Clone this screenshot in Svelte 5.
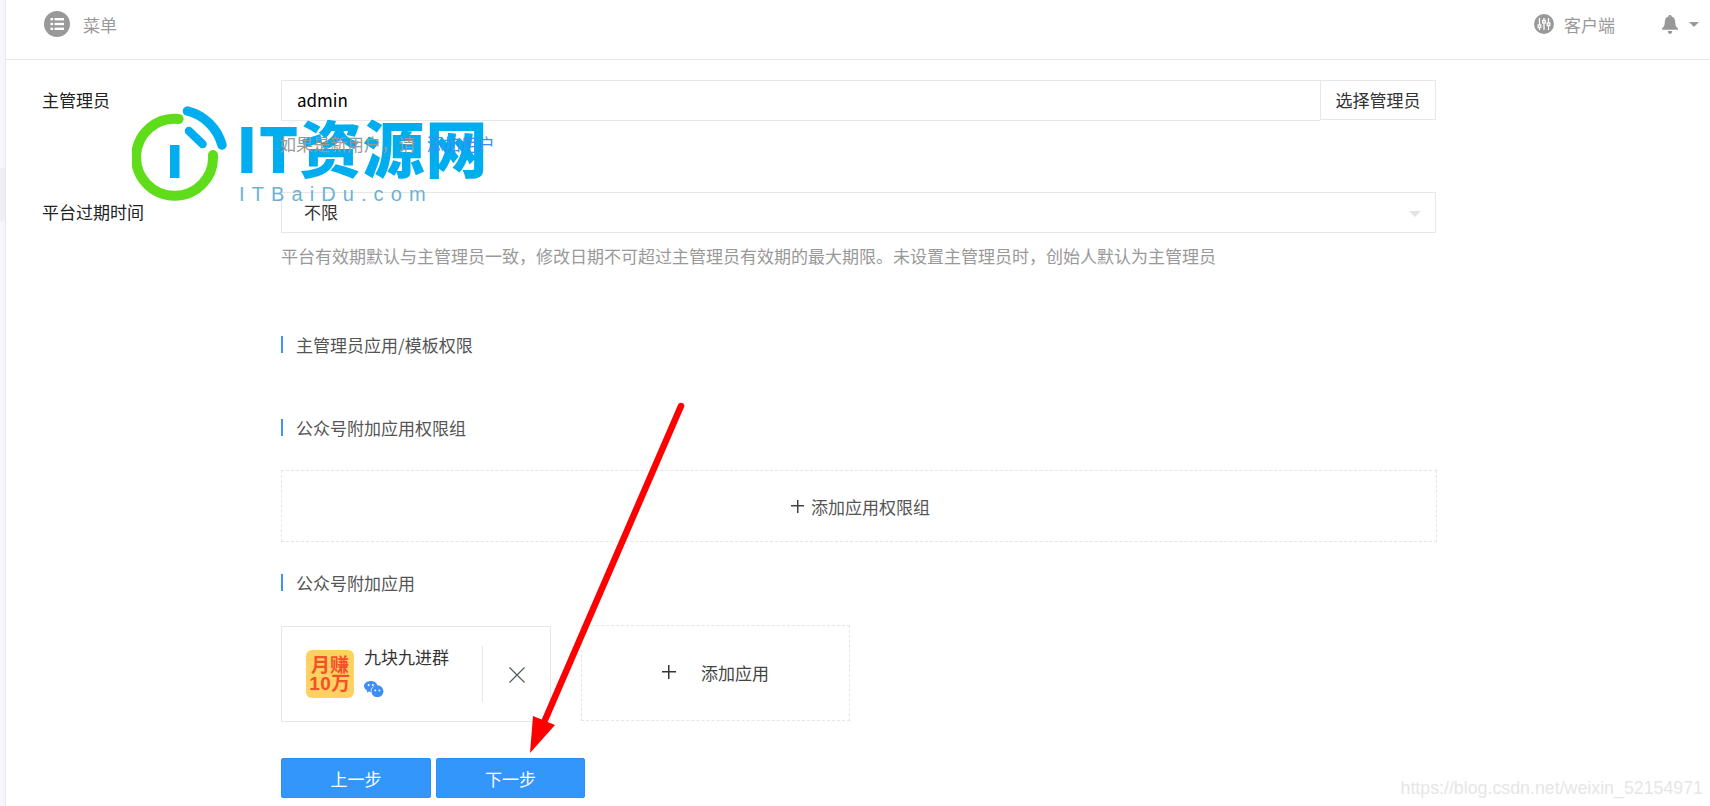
<script>
  const sections = { first: '主管理员应用/模板权限', second: '公众号附加应用权限组', third: '公众号附加应用' };
</script>

<div class="page">
  <aside class="rail"><div class="rail-mark"></div></aside>
  <main class="main">
    <header class="top">
      <div class="top-left">
        <svg class="menu-ic" viewBox="0 0 26 26" aria-hidden="true">
          <circle cx="13" cy="13" r="13" fill="#999"/>
          <g fill="#fff">
            <rect x="6.5" y="7" width="2.6" height="2.4"/><rect x="10.5" y="7" width="9.5" height="2.4"/>
            <rect x="6.5" y="11.8" width="2.6" height="2.4"/><rect x="10.5" y="11.8" width="9.5" height="2.4"/>
            <rect x="6.5" y="16.6" width="2.6" height="2.4"/><rect x="10.5" y="16.6" width="9.5" height="2.4"/>
          </g>
        </svg>
        <span>菜单</span>
      </div>
      <div class="top-right">
        <svg class="client-ic" viewBox="0 0 20 20" aria-hidden="true">
          <circle cx="10" cy="10" r="10" fill="#999"/>
          <g stroke="#fff" stroke-width="1.3" fill="#999">
            <path d="M5.5 4v12M10 4v12M14.5 4v12"/>
            <rect x="4.2" y="11" width="2.6" height="2.4"/>
            <rect x="8.7" y="6.5" width="2.6" height="2.4"/>
            <rect x="13.2" y="9" width="2.6" height="2.4"/>
          </g>
        </svg>
        <span class="client-text">客户端</span>
        <svg class="bell-ic" viewBox="0 0 16 19" aria-hidden="true">
          <path fill="#999" d="M8 0c1 0 1.6.6 1.6 1.500 2.600.7 3.600 3 3.600 5.600 0 3 .8 4.800 2.800 6.400v1.200H0v-1.200c2-1.600 2.800-3.400 2.800-6.400 0-2.600 1-4.900 3.600-5.600C6.400.6 7 0 8 0zM5.800 16h4.400c0 1.700-1 3-2.200 3s-2.200-1.300-2.200-3z"/>
        </svg>
        <span class="caret"></span>
      </div>
    </header>

    <form class="form" onsubmit={(e) => e.preventDefault()}>
      <div class="row">
        <div class="label">主管理员</div>
        <div class="control">
          <div class="input-group">
            <div class="input">admin</div>
            <div class="addon">选择管理员</div>
          </div>
          <p class="help help-first">如果是新用户，请 <span class="link">添加用户</span></p>
        </div>
      </div>

      <div class="row row-2">
        <div class="label">平台过期时间</div>
        <div class="control">
          <div class="select"><span>不限</span><i class="select-caret"></i></div>
          <p class="help">平台有效期默认与主管理员一致，修改日期不可超过主管理员有效期的最大期限。未设置主管理员时，创始人默认为主管理员</p>
        </div>
      </div>

      <div class="block">
        <h3 class="sec sec-1">{sections.first}</h3>
        <h3 class="sec sec-2">{sections.second}</h3>
        <div class="dash-wide"><span class="plus-s"></span><span>添加应用权限组</span></div>
        <h3 class="sec sec-3">{sections.third}</h3>
        <div class="apps">
          <div class="app-card">
            <div class="app-logo"><span>月赚</span><span class="ten">10万</span></div>
            <div class="app-info">
              <div class="app-name">九块九进群</div>
              <svg class="wx" viewBox="0 0 20 16" aria-hidden="true">
                <path fill="#3f8ef5" d="M7 0c3.500 0 6.300 2.200 6.300 5.100-.3 0-.6-.1-.9-.1-3.100 0-5.600 2.100-5.600 4.700 0 .4.100.8.200 1.200H7c-.7 0-1.300-.1-2-.3l-2.300 1.200.6-2C1.300 8.500 0 7 0 5.100 0 2.200 3.200 0 7 0z"/>
                <circle cx="13.400" cy="10.200" r="6" fill="#3f8ef5"/>
                <circle cx="4.700" cy="4" r="1" fill="#fff"/><circle cx="8.900" cy="4" r="1" fill="#fff"/>
                <circle cx="11.300" cy="9.400" r=".9" fill="#fff"/><circle cx="15.300" cy="9.400" r=".9" fill="#fff"/>
              </svg>
            </div>
            <div class="app-div"></div>
            <svg class="close" viewBox="0 0 16 16" aria-hidden="true"><path d="M.5.500l15 15M15.500.500l-15 15" stroke="#4a5a5c" stroke-width="1.100" fill="none"/></svg>
          </div>
          <div class="app-add"><span class="plus-l"></span><span>添加应用</span></div>
        </div>
        <div class="actions">
          <button type="button" class="btn btn-prev">上一步</button>
          <button type="button" class="btn btn-next">下一步</button>
        </div>
      </div>
    </form>
  </main>

  <svg class="arrow" viewBox="0 0 1710 806" aria-hidden="true">
    <path d="M681 406 L 545 720" stroke="#fe0000" stroke-width="6.500" stroke-linecap="round" fill="none"/>
    <path d="M530 753 L533 716 L555 725 Z" fill="#fe0000"/>
  </svg>

  <div class="brand">
    <svg class="brand-mark" viewBox="0 0 100 100" aria-hidden="true">
      <path d="M46.600 14 A38.500 38.500 0 1 0 81 50" fill="none" stroke="#5fdd1a" stroke-width="10" stroke-linecap="round"/>
      <path d="M55.500 6 A48 48 0 0 1 90 40" fill="none" stroke="#00adef" stroke-width="9.500" stroke-linecap="round"/>
      <path d="M57 26 L70.500 39" fill="none" stroke="#00adef" stroke-width="8.500" stroke-linecap="round"/>
      <rect x="38" y="40" width="9.500" height="33" fill="#00adef"/>
    </svg>
    <div class="brand-text">
      <div class="brand-main">IT资源网</div>
      <div class="brand-sub">ITBaiDu.com</div>
    </div>
  </div>

  <div class="mark">https://blog.csdn.net/weixin_52154971</div>
</div>

<style>
  :global(body) { margin: 0; background: #fff; }
  .page {
    position: relative; display: flex; width: 1710px; height: 806px; overflow: hidden; background: #fff;
    font-family: "Noto Sans CJK SC", "Noto Sans", sans-serif; font-size: 17px; color: #333;
  }
  .rail { flex: none; width: 5px; background: #f5f6fa; border-right: 1px solid #e8e8e8; padding-top: 168px; box-sizing: content-box; }
  .rail-mark { height: 53px; background: #eeeff5; }
  .main { flex: 1; min-width: 0; }
  .top {
    display: flex; align-items: center; justify-content: space-between; height: 48px; padding-bottom: 11px;
    border-bottom: 1px solid #e7e7e7; color: #999; box-sizing: content-box;
  }
  .top-left { display: flex; align-items: center; gap: 13px; padding-left: 38px; }
  .menu-ic { width: 26px; height: 26px; }
  .top-right { display: flex; align-items: center; padding-right: 11px; }
  .client-ic { width: 20px; height: 20px; margin-right: 10px; }
  .client-text { margin-right: 47px; }
  .bell-ic { width: 16px; height: 19px; }
  .caret { width: 0; height: 0; margin-left: 11px; border: 5px solid transparent; border-top: 5px solid #999; border-bottom: 0; }
  .form { padding: 20px 0 0 36px; width: 1394px; }
  .row { display: grid; grid-template-columns: 239px 1155px; }
  .row-2 { margin-top: 36px; }
  .label { color: #222; line-height: 39px; }
  .input-group { display: flex; align-items: flex-start; height: 41px; }
  .input {
    flex: 1; height: 41px; box-sizing: border-box; border: 1px solid #e7e7e7; border-right: 0;
    padding-left: 15px; line-height: 38px; color: #000;
  }
  .addon {
    width: 116px; height: 40px; box-sizing: border-box; border: 1px solid #e7e7e7; text-align: center; line-height: 37px; color: #333;
  }
  .select {
    display: flex; align-items: center; justify-content: space-between; height: 41px; box-sizing: border-box;
    border: 1px solid #e7e7e7; padding: 0 14px 2px 22px; color: #333;
  }
  .select-caret { width: 0; height: 0; border: 6px solid transparent; border-top: 6px solid #e3e3e3; border-bottom: 0; margin-top: 4px; }
  .help { position: relative; z-index: 2; margin: 11px 0 0; line-height: 24px; color: #999; }
  .help-first { margin-left: -2px; }
  .link { color: #3a8ef6; margin-left: 8px; }
  .block { margin-left: 239px; }
  .sec {
    margin: 0; height: 17px; font-size: 17px; font-weight: 400; line-height: 17px; color: #555; padding-left: 13px;
    border-left: 2px solid #3e93f7; 
  }
  .sec-1 { margin-top: 68px; }
  .sec-2 { margin-top: 66px; }
  .sec-3 { margin-top: 32px; }
  .dash-wide {
    display: flex; align-items: center; justify-content: center; gap: 7px; height: 72px; margin: 34px -1px 0 0;
    padding-left: 3px; box-sizing: border-box; border: 1px dashed #e5e5e5; color: #555;
  }
  .plus-s {
    width: 13px; height: 13px; background:
      linear-gradient(#444, #444) center / 13px 1.500px no-repeat,
      linear-gradient(#444, #444) center / 1.500px 13px no-repeat;
  }
  .apps { display: flex; align-items: flex-start; gap: 30px; margin-top: 34px; }
  .app-card {
    display: flex; align-items: flex-start; width: 270px; height: 96px; margin-top: 1px; box-sizing: border-box;
    border: 1px solid #e7e7e7; padding: 23px 0 0 24px;
  }
  .app-logo {
    flex: none; display: flex; flex-direction: column; align-items: center; justify-content: center; width: 48px; height: 48px;
    border-radius: 6px; background: #ffd160; color: #f4502a; font-weight: 700; font-size: 19px; line-height: 20px;
  }
  .ten { letter-spacing: .5px; font-family: "Liberation Sans", "Noto Sans CJK SC", sans-serif; }
  .app-info { width: 118px; padding-left: 10px; }
  .app-name { line-height: 24px; margin-top: -5px; margin-bottom: 1px; color: #333; }
  .wx { display: block; width: 20px; height: 16px; margin-top: 12px; }
  .app-div { width: 1px; height: 56px; margin-top: -4px; background: #e7e7e7; }
  .close { width: 16px; height: 16px; margin: 17px 0 0 26px; }
  .app-add {
    display: flex; align-items: center; width: 269px; height: 96px; box-sizing: border-box; border: 1px dashed #e5e5e5;
    padding: 0 0 2px 80px; gap: 25px; color: #444;
  }
  .plus-l {
    width: 14px; height: 14px; background:
      linear-gradient(#333, #333) center / 14px 1.500px no-repeat,
      linear-gradient(#333, #333) center / 1.500px 14px no-repeat;
  }
  .actions { display: flex; gap: 5px; margin-top: 36px; }
  .btn {
    width: 150px; height: 40px; padding: 0; border: 1px solid #2b8ef5; border-radius: 2px; background: #3296fa; color: #fff;
    font: inherit;
  }
  .btn-next { width: 149px; }
  .arrow { position: absolute; inset: 0; width: 1710px; height: 806px; pointer-events: none; }
  .brand { position: absolute; z-index: 1; left: 132px; top: 105px; display: flex; pointer-events: none; }
  .brand-mark { width: 100px; height: 100px; }
  .brand-text { margin-left: 4px; margin-top: 8px; }
  .brand-main {
    font-family: "Noto Sans CJK SC", sans-serif; font-weight: 900; font-size: 62px; line-height: 66px; color: #00adef; letter-spacing: 1px; white-space: nowrap;
  }
  .brand-sub {
    font-family: "Liberation Sans", sans-serif; font-size: 20px; line-height: 24px; letter-spacing: 7.100px; color: #6bb3d3; margin: 3px 0 0 3px; white-space: nowrap;
  }
  .mark {
    position: absolute; right: 7px; top: 777px; font-family: "Liberation Sans", sans-serif; font-size: 17.800px; line-height: 22px; color: #e6e6e6; white-space: nowrap;
  }
</style>
